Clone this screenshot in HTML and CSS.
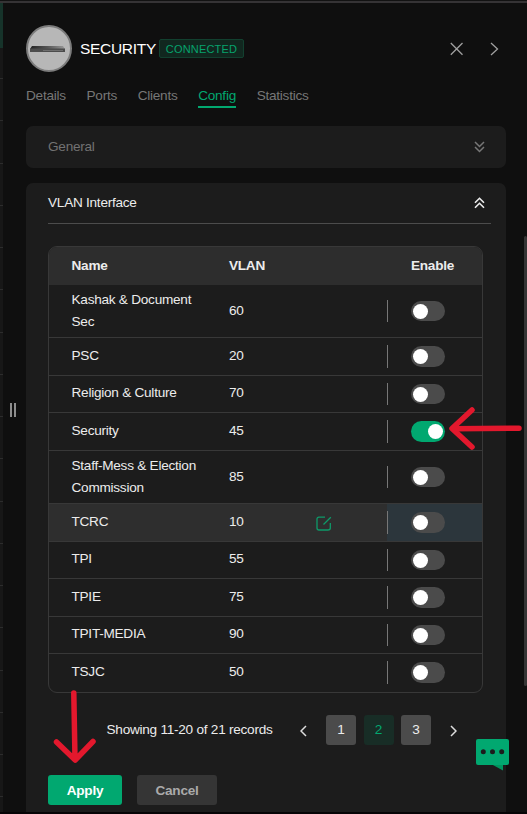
FILE: index.html
```html
<!DOCTYPE html>
<html lang="en">
<head>
<meta charset="utf-8">
<title>SECURITY</title>
<link rel="stylesheet" href="styles.css">
</head>
<body>
<div class="app">
  <div class="strip"></div>
  <div class="handle"><i></i><i></i></div>
  <main class="panel">
    <header class="head">
      <svg class="avatar" width="46" height="47" viewBox="0 0 46 47">
        <defs>
          <linearGradient id="metal" x1="0" x2="1"><stop offset="0" stop-color="#222"/><stop offset=".5" stop-color="#555"/><stop offset="1" stop-color="#999"/></linearGradient>
        </defs>
        <ellipse cx="23" cy="23.5" rx="22" ry="22.5" fill="#b7b7b7" stroke="#7c7c7c" stroke-width="2"/>
        <path d="M6 21h31l2 3H4z" fill="url(#metal)"/>
        <path d="M4 23.500h35v3.500H4z" fill="#4c4c4c"/>
        <path d="M17 25.500h20" stroke="#777" stroke-width=".8"/>
      </svg>
      <h1>SECURITY</h1>
      <span class="badge">CONNECTED</span>
      <svg class="close" width="14" height="14" viewBox="0 0 14 14"><path d="M.8 1l11.700 11.700M12.500 1L.8 12.700"/></svg>
      <svg class="next" width="9" height="14" viewBox="0 0 9 14"><path d="M1 1l6.500 6L1 13"/></svg>
    </header>
    <nav class="tabs">
      <a>Details</a><a>Ports</a><a>Clients</a><a class="active">Config</a><a>Statistics</a>
    </nav>
    <section class="card general">
      <span>General</span>
      <svg width="11" height="12" viewBox="0 0 11 12"><path d="M1 1l4.500 4.500L10 1M1 6l4.500 4.500L10 6"/></svg>
    </section>
    <section class="card vlan">
      <div class="card-head">
        <span>VLAN Interface</span>
        <svg width="11" height="12" viewBox="0 0 11 12"><path d="M1 5.800l4.500-4.500L10 5.800M1 10.800l4.500-4.500L10 10.800"/></svg>
      </div>
      <div class="table">
        <div class="row th"><span>Name</span><span>VLAN</span><span></span><span class="en">Enable</span></div>
        <div class="row tall"><span>Kashak &amp; Document Sec</span><span>60</span><span></span><span class="en"><b class="toggle"></b></span></div>
        <div class="row"><span>PSC</span><span>20</span><span></span><span class="en"><b class="toggle"></b></span></div>
        <div class="row short"><span>Religion &amp; Culture</span><span>70</span><span></span><span class="en"><b class="toggle"></b></span></div>
        <div class="row"><span>Security</span><span>45</span><span></span><span class="en"><b class="toggle on"></b></span></div>
        <div class="row tall"><span>Staff-Mess &amp; Election Commission</span><span>85</span><span></span><span class="en"><b class="toggle"></b></span></div>
        <div class="row hover"><span>TCRC</span><span>10</span><span class="edit"><svg width="16" height="15" viewBox="0 0 16 15"><path d="M9 1.200H3Q1 1.200 1 3v9q0 2 2 2h9q2.300 0 2.300-2V7M7.500 8.500L14.800 1.200"/></svg></span><span class="en"><b class="toggle"></b></span></div>
        <div class="row short"><span>TPI</span><span>55</span><span></span><span class="en"><b class="toggle"></b></span></div>
        <div class="row"><span>TPIE</span><span>75</span><span></span><span class="en"><b class="toggle"></b></span></div>
        <div class="row short"><span>TPIT-MEDIA</span><span>90</span><span></span><span class="en"><b class="toggle"></b></span></div>
        <div class="row"><span>TSJC</span><span>50</span><span></span><span class="en"><b class="toggle"></b></span></div>
      </div>
      <div class="pager">
        <span class="count">Showing 11-20 of 21 records</span>
        <svg class="arrow prev" width="7" height="12" viewBox="0 0 7 12"><path d="M6 1L1 6l5 5"/></svg>
        <b class="page">1</b><b class="page current">2</b><b class="page">3</b>
        <svg class="arrow" width="7" height="12" viewBox="0 0 7 12"><path d="M1 1l5 5-5 5"/></svg>
      </div>
      <div class="actions"><button class="apply">Apply</button><button class="cancel">Cancel</button></div>
    </section>
  </main>
  <div class="scrollbar"></div>
  <svg class="chat" width="33" height="32" viewBox="0 0 33 32">
    <path d="M16 25.500h11v6z" fill="#00955f"/>
    <rect width="33" height="26" rx="2" fill="#01a870"/>
    <g fill="#1c1c1c"><circle cx="7.300" cy="12.800" r="2.500"/><circle cx="16.500" cy="12.800" r="2.500"/><circle cx="25.700" cy="12.800" r="2.500"/></g>
  </svg>
  <svg class="marks" width="527" height="814" viewBox="0 0 527 814">
    <path d="M519 428.200L454 428.800M472 410l-20 18.500L472 447M73.800 693l1.200 66M56.500 742l18.700 18L93 741.500"/>
  </svg>
</div>
</body>
</html>
```
FILE: styles.css
```css
* { box-sizing: border-box; }
body { margin: 0; background: #0f0f0f; font: 13.6px/22px "Liberation Sans", Arial, sans-serif; letter-spacing: -.25px; color: #ececec; }
svg { display: block; fill: none; flex: none; }
.app {
  position: relative; width: 527px; height: 814px; overflow: hidden;
  display: grid; grid-template-columns: 3px 23px 480px 18px 3px;
  border-top: 1px solid #121212; border-bottom: 2px solid #060406;
}
.app::before { content: ""; position: absolute; left: 0; right: 0; top: 0; height: 2px; background: #353335; }
.strip {
  margin-top: 2px;
  background:
    linear-gradient(#16332a, #16332a) 0 0 / 3px 45px no-repeat,
    repeating-linear-gradient(#171717 0 41px, #2c2c2c 41px 42.250px) 0 34px;
}
.handle { display: flex; justify-content: center; gap: 2px; padding: 402px 3px 0 0; }
.handle i { width: 2px; height: 14px; background: #8d8d8d; }
.panel { display: flex; flex-direction: column; }
.head { display: flex; align-items: center; margin-top: 24px; height: 47px; }
h1 { margin: 0 0 0 8px; font-size: 15.500px; letter-spacing: -.3px; font-weight: 400; color: #fff; }
.badge {
  margin-left: 3px; width: 85px; height: 19px; border: 1px solid #12402f; border-radius: 2px;
  background: #11271f; color: #06a36d; font-size: 11px; line-height: 18px; text-align: center; letter-spacing: .2px;
}
.close, .next { stroke: #a0a0a0; stroke-width: 1.300; }
.close { margin-left: auto; }
.next { margin: 0 7px 0 26px; }
.tabs { display: flex; gap: 20.700px; margin-top: 11px; height: 43px; color: #777; }
.tabs a { height: 25px; line-height: 25px; }
.tabs .active { color: #02a870; border-bottom: 2px solid #02a870; }
.card { background: #1c1c1c; border-radius: 7px; }
.general { display: flex; justify-content: space-between; align-items: center; height: 42px; padding: 0 21px 0 22px; color: #727272; }
.general svg { stroke: #777; stroke-width: 1.500; }
.vlan { margin-top: 15px; height: 629px; padding: 0 15px 0 22px; border-radius: 7px 7px 0 0; }
.card-head { display: flex; justify-content: space-between; align-items: center; height: 41px; padding-right: 6px; border-bottom: 1px solid #4c4c4c; }
.card-head svg { stroke: #eee; stroke-width: 1.600; }
.table {
  display: grid; grid-template-rows: 38px 53px 38px 37px 38px 53px 38px 37px 38px 37px 38px;
  width: 435px; margin-top: 22px; border: 1px solid #383838; border-radius: 9px; overflow: hidden;
}
.row { display: grid; grid-template-columns: 157.500px 86.500px 72px 1fr; align-items: center; padding-left: 22.500px; border-bottom: 1px solid #383838; }
.row > .en { margin-left: -.5px; }
.row:last-child { border-bottom-color: transparent; }
.row > span { margin-top: -1px; }
.row.short > span { margin-top: -2px; }
.row > span:first-child { padding-right: 20px; }
.row > .en.en { display: flex; align-items: center; align-self: stretch; margin-top: 0; }
.row .en::before { content: ""; width: 1px; height: 23px; margin-right: 23px; background: #777; }
.tall .en::before, .short .en::before { height: 22px; }
.th { background: #2d2d2d; border-bottom-color: #2d2d2d; font-weight: 700; }
.row.th > span { margin-top: 0; }
.row.th .en::before { background: transparent; }
.hover { background: #2e2e2e; }
.hover .en { background: #2c363c; }
.edit svg { stroke: #0d9a69; stroke-width: 1.300; margin-top: 2px; }
.toggle { width: 34px; height: 21px; padding: 3px 2px; border-radius: 11px; background: #4b4b4b; }
.tall .toggle, .short .toggle { height: 20px; }
.toggle::before { content: ""; display: block; width: 15px; height: 15px; border-radius: 50%; background: #fff; }
.toggle.on { background: #01a870; }
.toggle.on::before { margin-left: auto; }
.pager { display: flex; align-items: center; height: 30px; margin: 22px 0 0 58.500px; }
.count { width: 193.500px; }
.arrow { stroke: #ddd; stroke-width: 1.500; margin-top: 2px; }
.prev { margin-right: 19px; }
.page { width: 30px; height: 30px; margin-right: 7.500px; border-radius: 3px; background: #4b4b4b; text-align: center; line-height: 29px; font-weight: 400; }
.page.current { background: #182d26; color: #02a870; }
.page + .arrow { margin-left: 11px; }
.actions { display: flex; gap: 15px; margin-top: 30px; }
button { height: 30px; border: 0; border-radius: 3px; font: bold 13.6px/29px "Liberation Sans", Arial, sans-serif; letter-spacing: -.25px; padding: 0; }
.apply { width: 74px; background: #01a870; color: #fff; }
.cancel { width: 80px; background: #353535; color: #aaa; }
.scrollbar { grid-column: 5; margin-top: 235px; height: 450px; background: #353535; border-radius: 2px; }
.chat { position: absolute; left: 476px; top: 738px; }
.marks { position: absolute; left: 0; top: -1px; stroke: #e3182d; stroke-width: 5.500; stroke-linecap: round; stroke-linejoin: round; }
```
